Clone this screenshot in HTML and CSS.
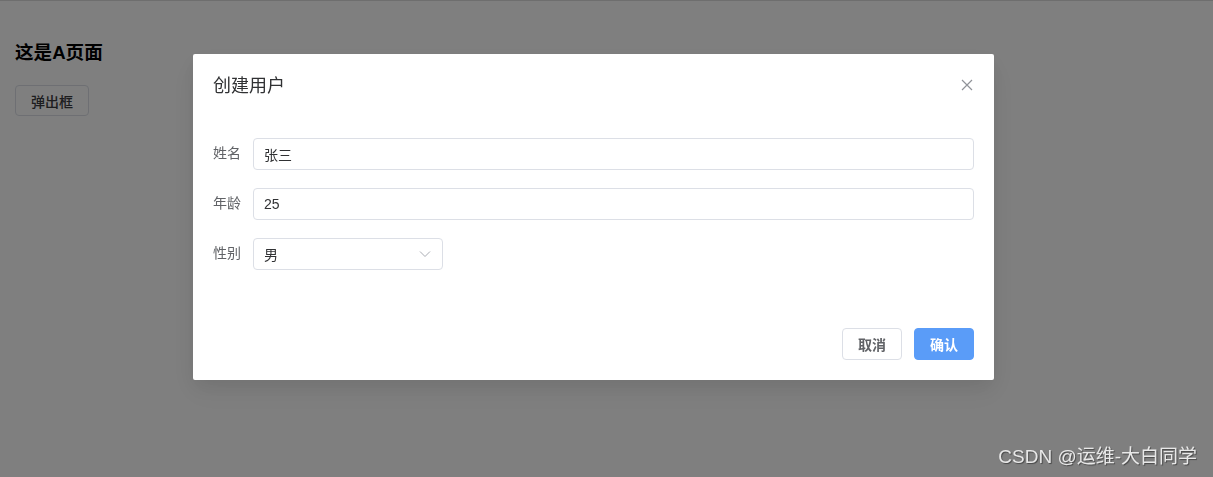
FILE: index.html
```html
<!DOCTYPE html>
<html lang="zh-CN">
<head>
	<meta charset="UTF-8">
	<meta name="viewport" content="width=device-width, initial-scale=1.0">
	<link rel="stylesheet" href="styles.css">
	<title>A页面</title>
</head>
<body>
	<div class="page">
		<h3>这是A页面</h3>
		<button class="btn btn-open">弹出框</button>
	</div>

	<div class="overlay">
		<div class="dialog">
			<header class="dialog-header">
				<span class="dialog-title">创建用户</span>
				<button class="dialog-close" aria-label="关闭">
					<svg width="12" height="12" viewBox="0 0 12 12">
						<path d="M1 1L11 11M11 1L1 11" stroke="#909399" stroke-width="1.2" fill="none"/>
					</svg>
				</button>
			</header>
			<div class="dialog-body">
				<form class="form">
					<div class="form-item">
						<label>姓名</label>
						<div class="input"><span>张三</span></div>
					</div>
					<div class="form-item">
						<label>年龄</label>
						<div class="input"><span>25</span></div>
					</div>
					<div class="form-item">
						<label>性别</label>
						<div class="input select">
							<span>男</span>
							<svg width="12" height="8" viewBox="0 0 12 8">
								<path d="M1 1.5L6 6.5L11 1.5" stroke="#a8abb2" stroke-width="1" fill="none"/>
							</svg>
						</div>
					</div>
				</form>
			</div>
			<footer class="dialog-footer">
				<button class="btn">取消</button>
				<button class="btn btn-primary">确认</button>
			</footer>
		</div>
		<div class="watermark">CSDN @运维-大白同学</div>
	</div>
</body>
</html>
```

FILE: styles.css
```css
body {
	margin: 0;
	padding: 0;
	border-top: 1px solid #dcdcdc;
	font-family: 'Liberation Sans', 'Noto Sans CJK SC', Arial, sans-serif;
	background: #fff;
	color: #303133;
}

.page {
	padding: 0 15px;
}

.page h3 {
	margin: 40px 0 20px;
	font-size: 18.6px;
	line-height: 24px;
	color: #000;
}

.btn {
	height: 31px;
	padding: 0 15px;
	border: 1px solid #dcdfe6;
	border-radius: 4px;
	background: #fff;
	color: #606266;
	font-family: inherit;
	font-size: 14px;
	font-weight: 600;
}

.btn-open {
	font-weight: 500;
	color: #3a3b3e;
}

.overlay {
	position: fixed;
	inset: 0;
	background: rgba(0, 0, 0, .5);
}

.dialog {
	position: absolute;
	top: 54px;
	left: 193px;
	width: 801px;
	background: #fff;
	border-radius: 2px;
	box-shadow: 0 12px 32px 4px rgba(0, 0, 0, .04), 0 8px 20px rgba(0, 0, 0, .08);
}

.dialog-header {
	padding: 20px 20px 10px;
}

.dialog-title {
	font-size: 18px;
	line-height: 24px;
	color: #303133;
}

.dialog-close {
	position: absolute;
	top: 25px;
	right: 21px;
	padding: 0;
	border: 0;
	background: transparent;
	line-height: 0;
}

.dialog-body {
	padding: 30px 20px;
}

.form-item {
	display: flex;
	margin-bottom: 18px;
}

.form-item label {
	padding-right: 12px;
	font-size: 14px;
	line-height: 31px;
	color: #606266;
}

.input {
	flex: 1;
	display: flex;
	align-items: center;
	height: 32px;
	box-sizing: border-box;
	padding: 0 10px 1px;
	border: 1px solid #dcdfe6;
	border-radius: 4px;
	font-size: 14px;
	color: #303133;
}

.input.select {
	flex: none;
	width: 190px;
	justify-content: space-between;
	padding-right: 11px;
}

.dialog-footer {
	display: flex;
	justify-content: flex-end;
	gap: 12px;
	padding: 10px 20px 20px;
}

.dialog-footer .btn {
	height: 32px;
}

.btn-primary {
	background: #5a9cf8;
	border-color: #5a9cf8;
	color: #fff;
}

.watermark {
	position: absolute;
	right: 16px;
	bottom: 8px;
	font-size: 19px;
	line-height: 24px;
	color: #e8e8e8;
	text-shadow: 1px 1px 1px rgba(0, 0, 0, .45);
}
```
